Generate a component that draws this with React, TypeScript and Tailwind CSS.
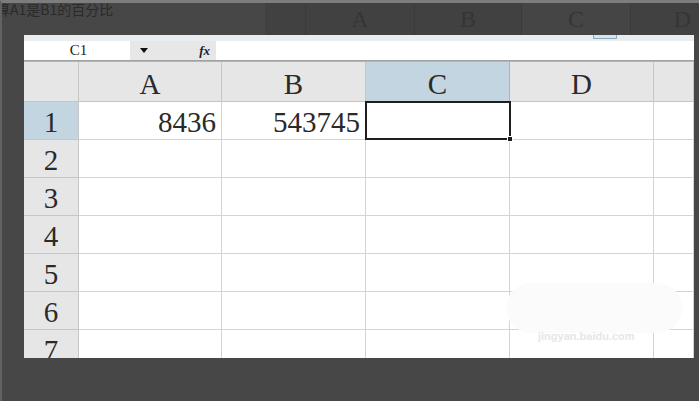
import React from 'react'

const cols = ['A', 'B', 'C', 'D', '']
const rows = [1, 2, 3, 4, 5, 6, 7]
const data: Record<string, string> = { A1: '8436', B1: '543745' }

function Cell({ col, row }: { col: string; row: number }) {
  const key = col + row
  const selected = key === 'C1'
  return (
    <div className="relative h-[38px] border-b border-r border-[#d4d4d4] bg-white flex items-center justify-end pr-[5px] text-[29px] leading-none text-[#2a2a2a] pt-[3px]">
      {data[key]}
      {selected && (
        <div className="absolute z-10 -left-[1px] -top-[1px] w-[146px] h-[39px] border-2 border-[#1e1e1e]">
          <div className="absolute -right-[4px] -bottom-[4px] w-[6px] h-[6px] bg-[#1e1e1e] border border-white" />
        </div>
      )}
    </div>
  )
}

export default function App() {
  return (
    <div className="relative w-[699px] h-[401px] overflow-hidden bg-[#474747] border-t-[3px] border-l-2 border-t-[#7d7d7d] border-l-[#626262]">
      {/* backdrop: the sheet behind the window */}
      <div className="flex h-[32px]">
        <div className="w-[269px] text-[14px] leading-[12px] text-[#2a2a2a] -ml-[6px] whitespace-nowrap font-['Noto_Sans_CJK_SC','Noto_Sans',sans-serif]">
          算A1是B1的百分比
        </div>
        <div className="flex flex-1 bg-[#414141] text-[24px] text-[#353535] leading-none font-['Liberation_Serif',serif]">
          <div className="w-[41px] border-r border-[#3a3a3a]" />
          <div className="w-[109px] border-r border-[#3a3a3a] flex items-end justify-center pb-[4px]">A</div>
          <div className="w-[107px] border-r border-[#3a3a3a] flex items-end justify-center pb-[4px]">B</div>
          <div className="w-[109px] border-r border-[#3a3a3a] bg-[#454545] flex items-end justify-center pb-[4px]">C</div>
          <div className="flex-1 flex items-end justify-end pr-[8px] pb-[4px]">D</div>
        </div>
      </div>

      {/* the spreadsheet window */}
      <div className="relative ml-[22px] w-[670px] h-[323px] bg-white overflow-hidden font-['Liberation_Serif',serif]">
        <div className="h-[6px] bg-[#e9edf0]" />
        <div className="flex h-[20px] border-b border-[#a2a2a2]">
          <div className="w-[106px] bg-white flex items-center justify-center text-[15px] text-[#222] pl-[3px]">
            C1
          </div>
          <div className="w-[86px] bg-[#e7e7e7] flex items-center justify-between pl-[10px] pr-[6px]">
            <svg width="8" height="5" viewBox="0 0 8 5">
              <path d="M0 0h8L4 5z" fill="#111" />
            </svg>
            <span className="italic font-bold text-[13px] text-[#222]">fx</span>
          </div>
          <div className="flex-1 bg-white" />
        </div>

        <div className="grid grid-cols-[55px_143px_144px_144px_144px_40px] border-t border-[#b4b4b4]">
          <div className="h-[40px] bg-[#e6e6e6] border-r border-b border-[#c6c6c6]" />
          {cols.map((c) => (
            <div
              key={c || 'E'}
              className={
                'h-[40px] border-r border-b flex items-center justify-center pt-[6px] text-[29px] leading-none text-[#2a2a2a] ' +
                (c === 'C' ? 'bg-[#c2d5e1] border-[#9fb8c8]' : 'bg-[#e6e6e6] border-[#c6c6c6]')
              }
            >
              {c}
            </div>
          ))}
          {rows.map((r) => (
            <React.Fragment key={r}>
              <div
                className={
                  'h-[38px] border-r border-b border-[#c6c6c6] flex items-center justify-center pt-[3px] text-[29px] leading-none text-[#2a2a2a] ' +
                  (r === 1 ? 'bg-[#c2d5e1]' : 'bg-[#e6e6e6]')
                }
              >
                {r}
              </div>
              {cols.map((c) => (
                <Cell key={c + r} col={c || 'E'} row={r} />
              ))}
            </React.Fragment>
          ))}
        </div>

        {/* watermark */}
        <div className="absolute left-[482px] top-[248px] w-[176px] h-[50px] rounded-[28px] bg-[#fbfbfb]" />
        <div className="absolute left-[514px] top-[296px] text-[11px] leading-none text-[#e6e6e6] font-bold font-['Liberation_Sans',sans-serif]">
          jingyan.baidu.com
        </div>
      </div>

      {/* stray selection marker from the sheet behind */}
      <div className="absolute left-[591px] top-[32px] w-[24px] h-[4px] bg-[#d3e5f0] border-x border-b border-[#8fa9b8]" />
    </div>
  )
}
